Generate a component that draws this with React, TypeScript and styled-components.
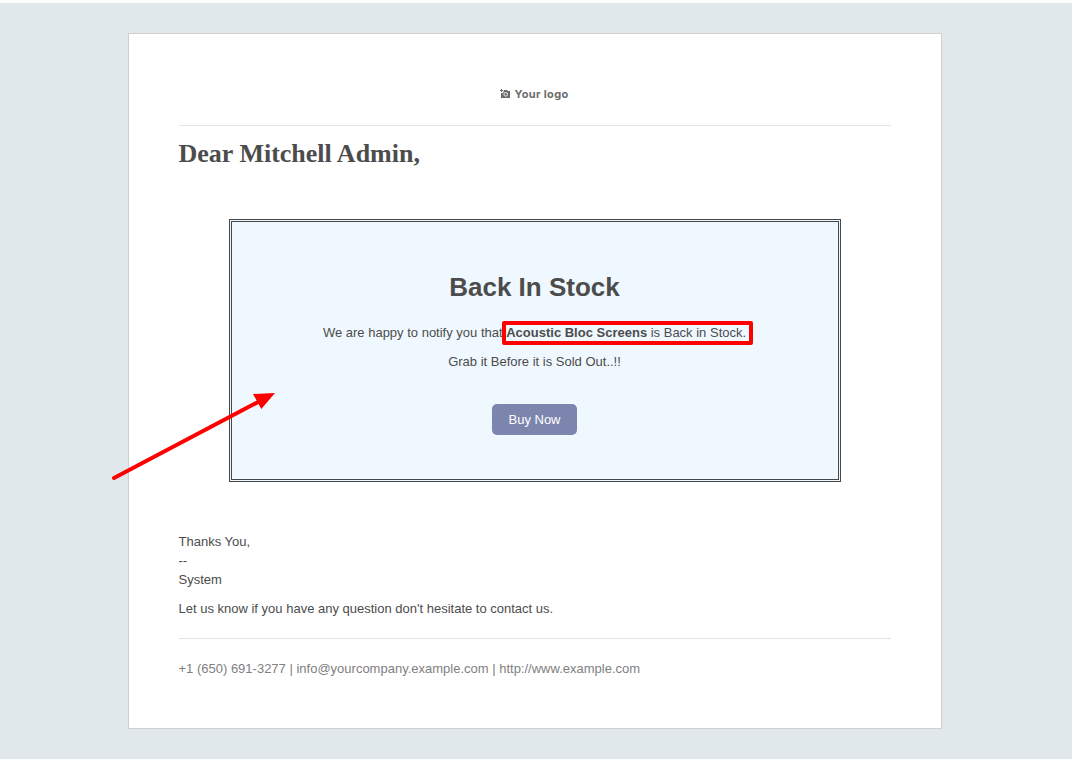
import React from "react";
import styled, { createGlobalStyle } from "styled-components";

const Global = createGlobalStyle`
  body { margin: 0; background: #fff; }
  *, *::before, *::after { box-sizing: border-box; }
`;
const Backdrop = styled.main`
  width: 1072px;
  height: 756px;
  margin-top: 3px;
  padding: 30px 0 0 128px;
  display: flow-root;
  background: #e0e8eb;
  font: 13px/19px "Liberation Sans", Arial, sans-serif;
  color: #4c4c4c;
`;
const Letter = styled.article`
  position: relative;
  width: 814px;
  height: 696px;
  padding: 0 50.5px 0 49.5px;
  background: #fff;
  border: 1px solid #cfcfcf;
`;
const Header = styled.header`
  height: 92px;
  padding-top: 52px;
  display: flex;
  justify-content: center;
  border-bottom: 1px solid #e3e3e3;
`;
const Logo = styled.div`
  display: flex;
  align-items: center;
  height: 16px;
  gap: 4px;
  font: 700 11px/16px Inter, sans-serif;
  letter-spacing: 0.35px;
  color: #6c6c6c;
`;
const Greeting = styled.h1`
  margin: 12px 0 0;
  font: 700 26px/31px "Liberation Serif", serif;
`;
const Notice = styled.section`
  width: 612px;
  height: 263px;
  margin: 50px 0 0 50px;
  padding-top: 50px;
  border: 3px double #454748;
  background: #f0f8ff;
  text-align: center;
`;
const Title = styled.h2`
  margin: 0 0 20px;
  font: 700 26px/31px "Liberation Sans", Arial, sans-serif;
`;
const Line = styled.p`
  margin: 0 0 10px;
`;
const Highlight = styled.span`
  position: relative;
  &::after {
    content: "";
    position: absolute;
    left: -4.3px;
    width: 251px;
    top: -4px;
    height: 24px;
    border: 4px solid #fe0000;
    border-radius: 2px;
  }
`;
const BuyButton = styled.a`
  display: inline-block;
  margin-top: 23px;
  width: 85px;
  height: 31px;
  border-radius: 5px;
  background: #7c85ae;
  color: #fff;
  line-height: 31px;
`;
const Closing = styled.section`
  margin-top: 50px;
  height: 107px;
  border-bottom: 1px solid #e3e3e3;
`;
const Contact = styled.footer`
  margin-top: 20px;
  color: #808080;
`;
const Arrow = styled.svg`
  position: absolute;
  left: -19px;
  top: 354px;
`;

export default function App() {
  return (
    <Backdrop>
      <Global />
      <Letter>
        <Header>
          <Logo>
            <svg width="10" height="10" viewBox="0 0 10 10">
              <path d="M1 0h1v1h1v1H2v1H1V2H0V1h1zM4 1h3l1 1h2v7H1V4h2z" fill="#6c6c6c" />
              <circle cx="5.7" cy="5.3" r="1.8" fill="none" stroke="#fff" strokeWidth=".9" />
            </svg>
            Your logo
          </Logo>
        </Header>
        <Greeting>Dear Mitchell Admin,</Greeting>
        <Notice>
          <Title>Back In Stock</Title>
          <Line>
            We are happy to notify you that{" "}
            <Highlight><b>Acoustic Bloc Screens</b> is Back in Stock.</Highlight>
          </Line>
          <Line>Grab it Before it is Sold Out..!!</Line>
          <BuyButton>Buy Now</BuyButton>
        </Notice>
        <Closing>
          <div>Thanks You,</div>
          <div>--</div>
          <Line>System</Line>
          <div>Let us know if you have any question don't hesitate to contact us.</div>
        </Closing>
        <Contact>+1 (650) 691-3277 | info@yourcompany.example.com | http://www.example.com</Contact>
        <Arrow width="170" height="95" viewBox="110 388 170 95">
          <path d="M114 478L260 401" stroke="#fe0000" strokeWidth="4" strokeLinecap="round" />
          <path d="M275 393L253 394L261.300 409Z" fill="#fe0000" />
        </Arrow>
      </Letter>
    </Backdrop>
  );
}
